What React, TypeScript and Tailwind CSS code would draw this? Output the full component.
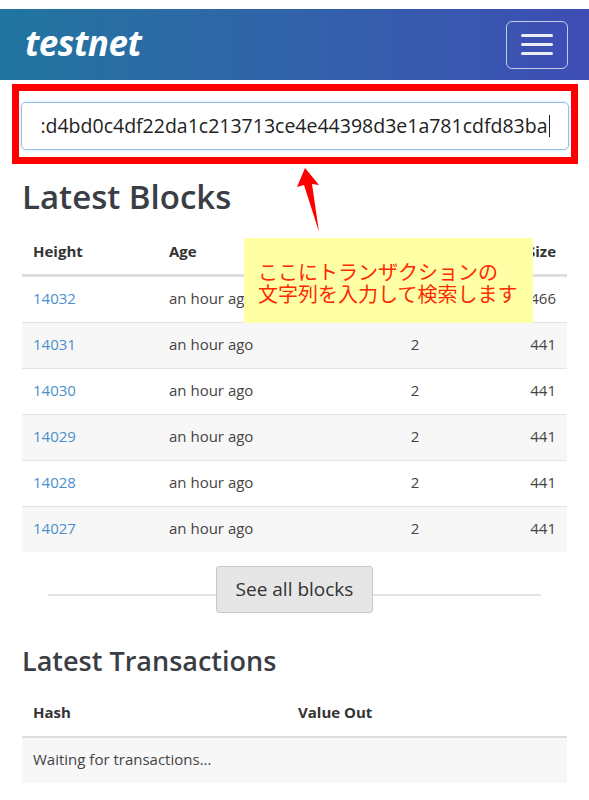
import React from "react";

const BLOCKS = [
  { height: 14032, age: "an hour ago", txns: 2, size: 466 },
  { height: 14031, age: "an hour ago", txns: 2, size: 441 },
  { height: 14030, age: "an hour ago", txns: 2, size: 441 },
  { height: 14029, age: "an hour ago", txns: 2, size: 441 },
  { height: 14028, age: "an hour ago", txns: 2, size: 441 },
  { height: 14027, age: "an hour ago", txns: 2, size: 441 },
];

const SEARCH_VALUE = ":d4bd0c4df22da1c213713ce4e44398d3e1a781cdfd83ba";

export default function App() {
  return (
    <div className="relative min-h-[800px] w-full bg-white font-['Open_Sans','Noto_Sans',sans-serif] text-[#444]">
      <div className="h-[9px]" />

      {/* Navbar */}
      <header className="flex h-[71px] items-center justify-between bg-linear-to-r from-[#20759f] to-[#3d4db4] pl-[25px] pr-[21px]">
        <span className="mt-[-4px] text-[35px] font-bold italic leading-none tracking-[-0.5px] text-white">
          testnet
        </span>
        <button className="flex h-[48px] w-[62px] flex-col items-center justify-center gap-[6px] rounded-[6px] border border-white/70">
          <span className="h-[3px] w-[32px] rounded-sm bg-white/90" />
          <span className="h-[3px] w-[32px] rounded-sm bg-white/90" />
          <span className="h-[3px] w-[32px] rounded-sm bg-white/90" />
        </button>
      </header>

      {/* Search box (highlighted) */}
      <div className="ml-[12px] mr-[11px] mt-[4px] border-[7px] border-[#ff0000] px-[2px] pb-[7px] pt-[11px]">
        <div className="flex h-[48px] items-center justify-end overflow-hidden rounded-[5px] border border-[#8fc2ea] pr-[18px] shadow-[0_0_3px_rgba(128,189,255,0.5)]">
          <span className="whitespace-nowrap text-[19.5px] leading-none text-[#222]">
            {SEARCH_VALUE}
          </span>
          <span className="ml-[1px] h-[22px] w-[1.5px] bg-[#222]" />
        </div>
      </div>

      <main className="px-[22px]">
        {/* Latest Blocks */}
        <h2 className="mt-[13px] text-[33px] font-semibold leading-[40px] text-[#3a3e44]">
          Latest Blocks
        </h2>

        <div className="mt-[13px] text-[15px] leading-[22px]">
          <div className="flex border-b-2 border-[#dedede] pb-[12px] pt-[10px] font-bold text-[#333]">
            <div className="w-[136px] pl-[11px]">Height</div>
            <div className="w-[190px] pl-[11px]">Age</div>
            <div className="w-[134px]" />
            <div className="flex-1 pr-[11px] text-right">Size</div>
          </div>
          {BLOCKS.map((b, i) => (
            <div
              key={b.height}
              className={
                i % 2 === 1
                  ? "flex border-t border-[#e3e3e3] bg-[#f7f7f7] pb-[12px] pt-[10px] leading-[23px]"
                  : "flex border-t border-[#e3e3e3] bg-white pb-[12px] pt-[10px] leading-[23px]"
              }
            >
              <div className="w-[136px] pl-[11px] text-[#4b8fcc]">{b.height}</div>
              <div className="w-[190px] pl-[11px]">{b.age}</div>
              <div className="w-[134px] text-center">{i === 0 ? "" : b.txns}</div>
              <div className="flex-1 pr-[11px] text-right">{b.size}</div>
            </div>
          ))}
        </div>

        {/* See all blocks */}
        <div className="mx-[26px] mt-[14px] flex items-center">
          <div className="mt-[10px] h-[2px] flex-1 bg-[#e4e4e4]" />
          <button className="flex h-[47px] w-[157px] items-center justify-center rounded-[3px] border border-[#c9c9c9] bg-[#e6e6e6] text-[19px] text-[#333]">
            See all blocks
          </button>
          <div className="mt-[10px] h-[2px] flex-1 bg-[#e4e4e4]" />
        </div>

        {/* Latest Transactions */}
        <h3 className="mt-[31px] text-[27px] font-semibold leading-[34px] text-[#3a3e44]">
          Latest Transactions
        </h3>

        <div className="mt-[12px] text-[15px] leading-[22px]">
          <div className="flex border-b-2 border-[#dedede] pb-[13px] pt-[11px] font-bold text-[#333]">
            <div className="w-[265px] pl-[11px]">Hash</div>
            <div className="flex-1 pl-[11px]">Value Out</div>
          </div>
          <div className="bg-[#f7f7f7] pb-[12px] pt-[10px] pl-[11px] leading-[23px]">
            Waiting for transactions...
          </div>
        </div>
      </main>

      {/* Annotation arrow */}
      <svg
        className="absolute left-[294px] top-[164px]"
        width="32"
        height="72"
        viewBox="0 0 32 72"
      >
        <polygon points="11,4 25,21 18,20 25,68 10,21 3,23" fill="#ff0000" />
      </svg>

      {/* Annotation callout */}
      <div className="absolute left-[244px] top-[238px] h-[85px] w-[289px] bg-[#ffffa6] pl-[14px] pt-[23px] font-['Noto_Sans_CJK_JP',sans-serif] text-[20px] leading-[22px] text-[#ff2a00]">
        <p>ここにトランザクションの</p>
        <p>文字列を入力して検索します</p>
      </div>
    </div>
  );
}
